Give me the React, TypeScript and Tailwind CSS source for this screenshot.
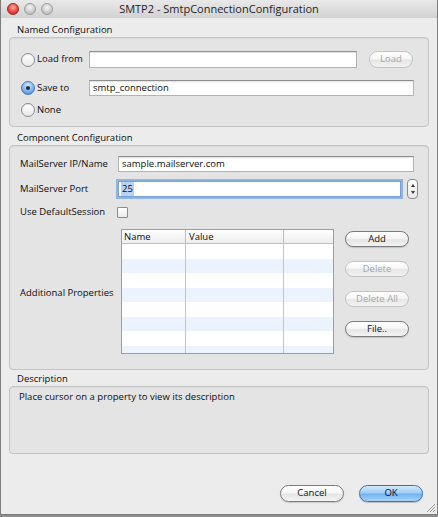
import type { ReactNode } from "react";

// Aqua-style dialog for editing an SMTP connection component.

function TrafficLight({ color }: { color: "red" | "gray" }) {
  const cls =
    color === "red"
      ? "bg-[radial-gradient(circle_at_50%_35%,#ffb3ad_0%,#f0544b_45%,#b51d16_100%)] border-[#9c2a25]"
      : "bg-[radial-gradient(circle_at_50%_35%,#f4f4f4_0%,#d2d2d2_50%,#a9a9a9_100%)] border-[#9d9d9d]";
  return <div className={`w-[12px] h-[12px] rounded-full border ${cls}`} />;
}

function Radio({ checked }: { checked?: boolean }) {
  return (
    <div
      className={`w-[14px] h-[14px] rounded-full border flex items-center justify-center shrink-0 ${
        checked
          ? "border-[#4a79b5] bg-[radial-gradient(circle_at_50%_30%,#d8ecff_0%,#7db5ef_55%,#3d86d8_100%)]"
          : "border-[#8c8c8c] bg-[linear-gradient(#ffffff,#e9e9e9)] shadow-[inset_0_1px_1px_rgba(0,0,0,0.08)]"
      }`}
    >
      {checked && <div className="w-[4px] h-[4px] rounded-full bg-[#1d2a3a]" />}
    </div>
  );
}

function TextField({ value, className = "" }: { value?: string; className?: string }) {
  return (
    <div
      className={`bg-white border border-[#b3b3b3] border-t-[#8e8e8e] shadow-[inset_0_1px_1px_rgba(0,0,0,0.12)] flex items-center px-[3px] ${className}`}
    >
      {value}
    </div>
  );
}

function PillButton({
  children,
  disabled,
  className = "",
}: {
  children: ReactNode;
  disabled?: boolean;
  className?: string;
}) {
  return (
    <div
      className={`rounded-full border flex items-center justify-center bg-[linear-gradient(#ffffff_0%,#f6f6f6_45%,#e6e6e6_55%,#f3f3f3_100%)] ${
        disabled
          ? "border-[#c2c2c2] text-[#a8a8a8]"
          : "border-[#7b7b7b] text-[#111] shadow-[0_1px_1px_rgba(0,0,0,0.15)]"
      } ${className}`}
    >
      {children}
    </div>
  );
}

function SectionLabel({ children, className = "" }: { children: ReactNode; className?: string }) {
  return <div className={`pl-[8px] h-[14px] leading-[14px] ${className}`}>{children}</div>;
}

function Panel({ children, className = "" }: { children: ReactNode; className?: string }) {
  return (
    <div className={`rounded-[4px] border border-[#c3c3c3] bg-[#e4e4e4] shadow-[inset_0_1px_1px_rgba(0,0,0,0.05)] ${className}`}>
      {children}
    </div>
  );
}

function PropertiesTable() {
  const rows = Array.from({ length: 8 }, (_, i) => i);
  return (
    <div className="w-[213px] h-[125px] border border-[#9d9d9d] bg-white overflow-hidden flex flex-col">
      <div className="h-[14px] flex border-b border-[#c0c0c0] bg-[linear-gradient(#ffffff,#ededed)] leading-[13px]">
        <div className="w-[64px] border-r border-[#bdbdbd] pl-[2px]">Name</div>
        <div className="w-[98px] border-r border-[#bdbdbd] pl-[3px]">Value</div>
        <div className="flex-1" />
      </div>
      {rows.map((i) => (
        <div key={i} className={`h-[14.5px] shrink-0 flex ${i % 2 === 1 ? "bg-[#edf3fe]" : "bg-white"}`}>
          <div className="w-[64px] border-r border-[#c4c4c4]" />
          <div className="w-[98px] border-r border-[#c4c4c4]" />
          <div className="flex-1" />
        </div>
      ))}
    </div>
  );
}

function Stepper() {
  return (
    <div className="ml-[6px] w-[11px] h-[20px] rounded-[4px] border border-[#8a8a8a] bg-[linear-gradient(#ffffff,#e8e8e8)] flex flex-col items-center justify-center gap-[4px]">
      <div className="w-0 h-0 border-l-[2.5px] border-r-[2.5px] border-b-[3px] border-l-transparent border-r-transparent border-b-[#333]" />
      <div className="w-0 h-0 border-l-[2.5px] border-r-[2.5px] border-t-[3px] border-l-transparent border-r-transparent border-t-[#333]" />
    </div>
  );
}

export default function App() {
  return (
    <div className="w-[438px] h-[517px] bg-[#8d8d8d] font-['Open_Sans',sans-serif] text-[9.5px] text-[#0d0d0d] overflow-hidden">
      <div className="relative h-[515px] bg-[#ececec] border-x border-b border-[#7d7d7d] flex flex-col">
        {/* title bar */}
        <div className="relative h-[18px] shrink-0 bg-[linear-gradient(#e9e9e9,#d2d2d2)] flex items-center">
          <div className="flex items-center gap-[5px] pl-[6px]">
            <TrafficLight color="red" />
            <TrafficLight color="gray" />
            <TrafficLight color="gray" />
          </div>
          <div className="absolute inset-0 flex items-center justify-center text-[11px] text-[#1e1e1e]">
            SMTP2 - SmtpConnectionConfiguration
          </div>
        </div>

        <div className="flex-1 flex flex-col px-[8px]">
          <SectionLabel className="mt-[5px]">Named Configuration</SectionLabel>
          <Panel className="h-[90px] flex flex-col">
            <div className="mt-[13px] h-[17px] flex items-center pl-[11px]">
              <div className="w-[68px] flex items-center gap-[2px]">
                <Radio />
                <span>Load from</span>
              </div>
              <TextField className="w-[268px] h-[17px]" />
              <PillButton disabled className="ml-[12px] w-[44px] h-[17px]">
                Load
              </PillButton>
            </div>
            <div className="mt-[12px] h-[16px] flex items-center pl-[11px]">
              <div className="w-[68px] flex items-center gap-[2px]">
                <Radio checked />
                <span>Save to</span>
              </div>
              <TextField value="smtp_connection" className="w-[325px] h-[16px]" />
            </div>
            <div className="mt-[7px] h-[14px] flex items-center pl-[11px] gap-[2px]">
              <Radio />
              <span>None</span>
            </div>
          </Panel>

          <SectionLabel className="mt-[4px]">Component Configuration</SectionLabel>
          <Panel className="h-[225px] flex flex-col">
            <div className="mt-[10px] h-[16px] flex items-center">
              <div className="w-[108px] pl-[10px]">MailServer IP/Name</div>
              <TextField value="sample.mailserver.com" className="w-[296px] h-[16px]" />
            </div>
            <div className="mt-[9px] h-[16px] flex items-center">
              <div className="w-[108px] pl-[10px]">MailServer Port</div>
              <div className="w-[283px] h-[16px] bg-white border border-[#7d9fcf] ring-[2px] ring-[#8db4e8] flex items-center px-[2px]">
                <span className="bg-[#b6d3f7] px-[1px]">25</span>
              </div>
              <Stepper />
            </div>
            <div className="mt-[10px] h-[11px] flex items-center">
              <div className="w-[107px] pl-[10px]">Use DefaultSession</div>
              <div className="w-[11px] h-[11px] border border-[#8c8c8c] bg-[linear-gradient(#ffffff,#ebebeb)] rounded-[1px]" />
            </div>
            <div className="mt-[11px] flex items-center">
              <div className="w-[111px] pl-[10px] pt-[3px]">Additional Properties</div>
              <PropertiesTable />
              <div className="ml-[11px] self-start mt-[2px] flex flex-col gap-[14px]">
                <PillButton className="w-[64px] h-[16px]">Add</PillButton>
                <PillButton disabled className="w-[64px] h-[16px]">
                  Delete
                </PillButton>
                <PillButton disabled className="w-[64px] h-[16px]">
                  Delete All
                </PillButton>
                <PillButton className="w-[64px] h-[16px]">File..</PillButton>
              </div>
            </div>
          </Panel>

          <SectionLabel className="mt-[2px] h-[13px] leading-[13px]">Description</SectionLabel>
          <Panel className="h-[68px] pl-[9px] pt-[3px]">
            Place cursor on a property to view its description
          </Panel>

          <div className="mt-auto mb-[12px] mr-[6px] flex justify-end gap-[15px]">
            <PillButton className="w-[64px] h-[17px]">Cancel</PillButton>
            <div className="w-[64px] h-[17px] rounded-full border border-[#3f6fae] bg-[linear-gradient(#d3e8fc_0%,#a3cdf6_45%,#71b2f1_55%,#a9d6fb_100%)] flex items-center justify-center shadow-[0_1px_1px_rgba(0,0,0,0.2)]">
              OK
            </div>
          </div>
        </div>

        {/* resize grip */}
        <svg className="absolute right-[1px] bottom-[1px]" width="11" height="11" viewBox="0 0 11 11">
          <path d="M10 2 L2 10 M10 5 L5 10 M10 8 L8 10" stroke="#9a9a9a" strokeWidth="1" />
        </svg>
      </div>
    </div>
  );
}
